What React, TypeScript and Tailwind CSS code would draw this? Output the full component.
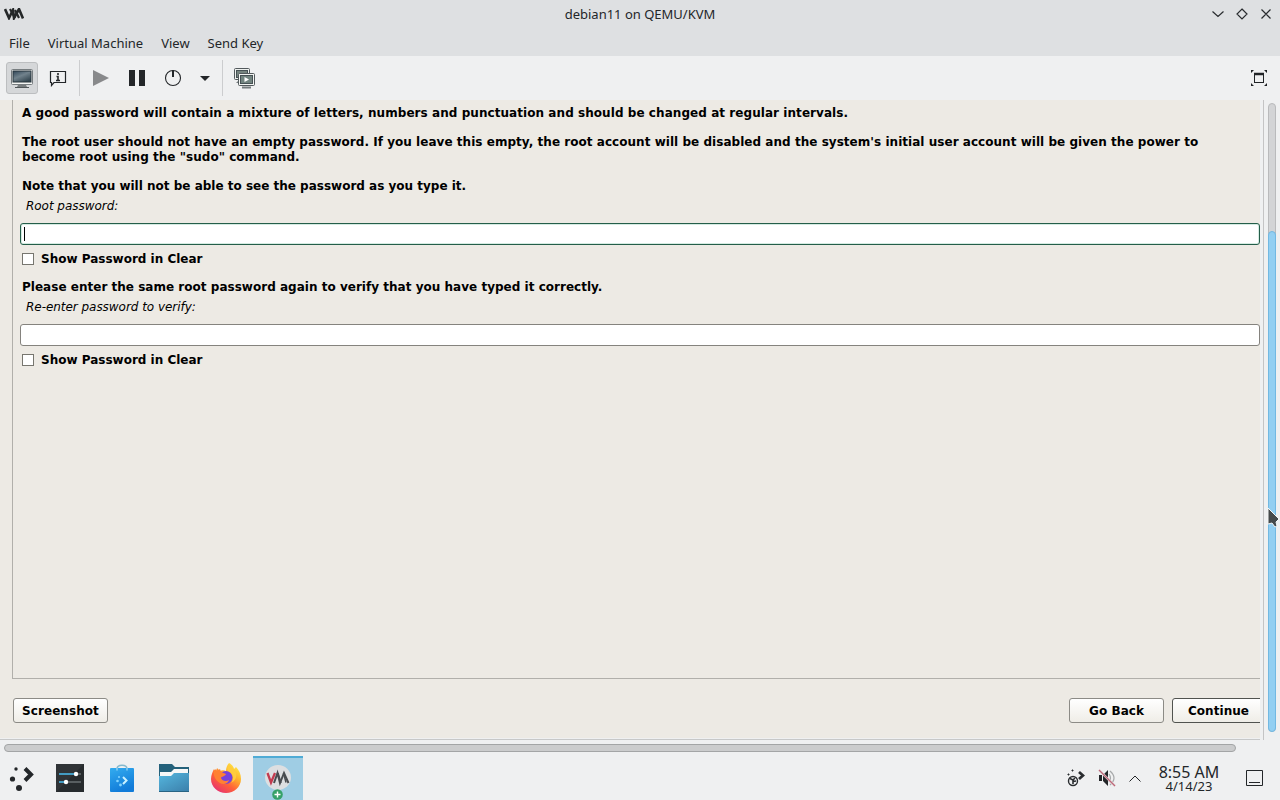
import type { ReactNode } from 'react';

const menus = ['File', 'Virtual Machine', 'View', 'Send Key'];

export default function App() {
  return (
    <div className="relative flex h-[800px] w-[1280px] flex-col overflow-hidden bg-[#eff0f1] font-['Noto_Sans',sans-serif] text-[13.33px] text-[#232629]">
      <TitleBar />
      <nav className="flex h-7 shrink-0 items-center gap-[18px] bg-[#dee0e2] pl-[9px] text-[13px] leading-4">
        {menus.map(menu => (
          <button key={menu} className="pt-0.5">{menu}</button>
        ))}
      </nav>
      <Toolbar />
      <main className="flex h-[640px] shrink-0">
        <div className="w-[1264px] border-r border-[#c4c4c5] pr-[3px]">
          <Installer />
        </div>
        <div className="flex-1 pt-[3px] pl-1">
          <div className="h-[629px] w-2 rounded-full border border-[#b9babc] bg-[#d3d4d6] pt-[127px]">
            <div className="-mx-px h-[501px] w-2 rounded-full border border-[#72b8e2] bg-[#93cff2]" />
          </div>
        </div>
      </main>
      <div className="h-4 shrink-0 pt-1 pl-1">
        <div className="h-2 w-[1232px] rounded-full border border-[#a3a5a6] bg-[#cbcccd]" />
      </div>
      <Taskbar />
      {/* Mouse pointer */}
      <svg className="absolute top-[505px] left-[1265px]" width="15" height="24" viewBox="0 0 15 24">
        <path d="M3 3v16l4-1 3 4 2-1-1-4 3-3z" fill="#454a4c" stroke="#f3f6f7" />
      </svg>
    </div>
  );
}

function TitleBar() {
  return (
    <header className="grid h-7 shrink-0 grid-cols-[1fr_auto_1fr] items-center bg-[#dee0e2]">
      <svg className="ml-1" width="20" height="12" viewBox="0 0 20 12" fill="none" stroke="#252829">
        <path d="M1 1l4 9 4-8 1 8 5-9 4 9.500" strokeWidth="2.600" />
        <path d="M6 1l5 9M11 2l4 8" strokeWidth="2.200" />
      </svg>
      <h1 className="text-[13px] leading-4">debian11 on QEMU/KVM</h1>
      <svg className="ml-auto" width="70" height="16" viewBox="0 0 70 16" fill="none" stroke="#292c2f" strokeWidth="1.200">
        <path d="M2.500 5.500l5.500 5 5.500-5M32 3l5 5-5 5-5-5zM51.500 3.500l9 9m0-9l-9 9" />
      </svg>
    </header>
  );
}

function Toolbar() {
  return (
    <div className="flex h-11 shrink-0 items-center">
      <button className="ml-1.5 flex h-8 w-8 items-center justify-center rounded-[3px] border border-[#bcbec0] bg-[#d5d7d9]">
        <svg width="24" height="24" viewBox="0 0 24 24">
          <defs>
            <linearGradient id="monitor" x2=".7" y2="1">
              <stop stopColor="#304557" />
              <stop offset=".5" stopColor="#71828c" />
              <stop offset="1" stopColor="#344650" />
            </linearGradient>
          </defs>
          <rect x="1.500" y="3.500" width="21" height="15" rx="1" fill="#f4f5f3" stroke="#777d80" />
          <rect x="3" y="5" width="18" height="11" fill="url(#monitor)" stroke="#26343d" />
          <path d="M8 19h8l1 2H7z" fill="#777c7e" />
          <path d="M5 21.500h14" stroke="#4f5558" />
        </svg>
      </button>
      <button className="ml-[11px]">
        <svg width="18" height="18" viewBox="0 0 18 18" fill="none" stroke="#232629">
          <path d="M1.500 2.500h15v11H5l-2.500 3v-3h-1z" strokeWidth="1.200" />
          <path d="M9 4v2M7.500 7.500H9V11M7 11.500h4" strokeWidth="1.600" />
        </svg>
      </button>
      <div className="ml-3 h-9 w-px bg-[#cccdcf]" />
      <button className="ml-3">
        <svg width="18" height="18" viewBox="0 0 18 18"><path d="M1 1v16l16-8z" fill="#88898b" /></svg>
      </button>
      <button className="ml-[19px] flex gap-1">
        <span className="h-4 w-1.5 bg-[#232629]" />
        <span className="h-4 w-1.5 bg-[#232629]" />
      </button>
      <button className="ml-[19px]">
        <svg width="18" height="18" viewBox="0 0 18 18" fill="none" stroke="#232629">
          <circle cx="9" cy="9" r="7.500" strokeWidth="1.100" />
          <path d="M9 1v7" strokeWidth="2" />
        </svg>
      </button>
      <button className="ml-[18px]">
        <svg width="10" height="5" viewBox="0 0 10 5"><path d="M0 0h10L5 5z" fill="#232629" /></svg>
      </button>
      <div className="ml-3 h-9 w-px bg-[#cccdcf]" />
      <button className="ml-[11px]">
        <svg width="22" height="22" viewBox="0 0 22 22">
          <rect x=".5" y="1.500" width="15" height="11" rx="1" fill="#edf0ee" stroke="#52595c" />
          <rect x="2.500" y="3.500" width="11" height="7" fill="#75847f" stroke="#465154" />
          <path d="M2 16h5v-2H4" fill="#747b7d" />
          <rect x="4.500" y="6.500" width="16" height="12" rx="1" fill="#f2f4f2" stroke="#52595c" />
          <rect x="6.500" y="8.500" width="12" height="8" fill="#728480" stroke="#465154" />
          <path d="M10.500 10v5l4.500-2.500z" fill="#fff" />
          <path d="M8 20.500h9" stroke="#747b7d" strokeWidth="2" />
        </svg>
      </button>
      <button className="mr-3 ml-auto">
        <svg width="18" height="18" viewBox="0 0 18 18" fill="#202326" stroke="#202326">
          <path d="M1 1h3L1 4zM17 1h-3l3 3zM1 17h3l-3-3zM17 17h-3l3-3z" stroke="none" />
          <rect x="4.500" y="4.500" width="9" height="9" fill="none" />
          <path d="M4 5h10" strokeWidth="2.500" />
        </svg>
      </button>
    </div>
  );
}

/* Guest display, running the graphical installer */
function Installer() {
  return (
    <div className="flex h-full flex-col border-b border-[#c7c8c8] pb-px">
      <div className="h-full overflow-hidden bg-[#edeae4] pl-3 font-['DejaVu_Sans',sans-serif] text-[12px] leading-[15px] font-bold text-black">
        <div className="h-[579px] border-b border-l border-[#b1afaa] pt-1.5 pl-[7px]">
          <div className="pl-0.5 whitespace-nowrap">
            <p className="tracking-[0.06px]">A good password will contain a mixture of letters, numbers and punctuation and should be changed at regular intervals.</p>
            <p className="mt-3.5 tracking-[0.036px]">
              The root user should not have an empty password. If you leave this empty, the root account will be disabled and the system's initial user account will be given the power to
              <br />
              become root using the "sudo" command.
            </p>
            <p className="mt-3.5">Note that you will not be able to see the password as you type it.</p>
          </div>
          <PasswordField label="Root password:" focused />
          <p className="mt-3.5 pl-0.5 tracking-[0.02px]">Please enter the same root password again to verify that you have typed it correctly.</p>
          <PasswordField label="Re-enter password to verify:" />
        </div>
        <div className="mt-[19px] flex w-[1255px] pl-px">
          <GuestButton className="w-[95px] border-[#8c8b86]">Screenshot</GuestButton>
          <GuestButton className="ml-[961px] w-[95px] border-[#8c8b86]">Go Back</GuestButton>
          <GuestButton className="ml-2 w-[95px] border-[#51534f] pr-0.5">Continue</GuestButton>
        </div>
      </div>
    </div>
  );
}

function PasswordField({ label, focused = false }: { label: string; focused?: boolean }) {
  return (
    <div>
      <label className="mt-[5px] block pl-1.5 text-[12px] font-normal tracking-[-0.04px] italic">{label}</label>
      <div className={`mt-[9px] h-[22px] w-[1240px] rounded-[3px] border bg-white pt-[3px] pl-[3px] ${focused ? 'border-[#245e49] shadow-[inset_0_0_0_1px_#d5ebe2]' : 'border-[#85837e]'}`}>
        {focused && <div className="h-3.5 w-px bg-black" />}
      </div>
      <label className="mt-1.5 flex h-[15px] items-center gap-[7px] pl-0.5">
        <span className="h-3 w-3 border border-[#77766f] bg-white" />
        <span className="pt-0.5">Show Password in Clear</span>
      </label>
    </div>
  );
}

function GuestButton({ className, children }: { className: string; children: ReactNode }) {
  return (
    <button className={`h-[25px] shrink-0 rounded-[3px] border bg-linear-to-b from-white to-[#efede7] pt-0.5 tracking-[0.06px] whitespace-nowrap ${className}`}>
      {children}
    </button>
  );
}

function Taskbar() {
  return (
    <footer className="flex h-11 shrink-0 items-center">
      <svg className="ml-[9px] shrink-0" width="26" height="26" viewBox="0 0 26 26">
        <circle cx="7" cy="4" r="1.700" fill="#232629" />
        <circle cx="3.500" cy="14" r="2.600" fill="#232629" />
        <circle cx="10" cy="23" r="3" fill="#232629" />
        <path d="M16 3.500l6 6-6 6" fill="none" stroke="#232629" strokeWidth="4" />
      </svg>
      <svg className="ml-[21px] shrink-0" width="28" height="28" viewBox="0 0 28 28">
        <path d="M0 0h28v28H0z" fill="#303437" />
        <path d="M0 28L28 0v28z" fill="#272b2e" />
        <path d="M3 10h22M3 18h22" stroke="#697073" strokeWidth="1.500" />
        <path d="M3 10h17M3 18h7" stroke="#3cafe2" strokeWidth="1.500" />
        <circle cx="20" cy="10" r="2.200" fill="#fff" />
        <circle cx="10" cy="18" r="2.200" fill="#fff" />
      </svg>
      <svg className="ml-[26px] shrink-0" width="24" height="28" viewBox="0 0 24 28">
        <defs>
          <linearGradient id="bag" x2=".4" y2="1"><stop stopColor="#33acef" /><stop offset="1" stopColor="#117bd9" /></linearGradient>
        </defs>
        <path d="M7 5c0-5 10-5 10 0" fill="none" stroke="#83b9ce" strokeWidth="1.500" />
        <rect y="4" width="24" height="24" rx="1" fill="url(#bag)" />
        <path d="M7 4v2.500M17 4v2.500" stroke="#bce6f7" />
        <path d="M13 13l3.500 3.500L13 20" fill="none" stroke="#c9f1ff" strokeWidth="2" />
        <g fill="#83d4ff"><circle cx="9" cy="13" r="1" /><circle cx="7.500" cy="17" r="1.300" /><circle cx="10.500" cy="21" r="1.400" /></g>
      </svg>
      <svg className="ml-[25px] shrink-0" width="30" height="28" viewBox="0 0 30 28">
        <defs>
          <linearGradient id="folder" x2=".8" y2="1"><stop stopColor="#55b7df" /><stop offset="1" stopColor="#3d83ae" /></linearGradient>
        </defs>
        <path d="M0 0h13l3 3h14v25H0z" fill="#24617b" />
        <path d="M1 8h11l3-3h14v9H1z" fill="#f6f7f7" />
        <path d="M0 12h12l3-3h15v19H0z" fill="url(#folder)" />
        <path d="M0 27.500h30" stroke="#286484" />
      </svg>
      <Firefox />
      {/* Active task */}
      <div className="ml-[11px] flex h-11 w-[50px] shrink-0 justify-center border-t-2 border-[#4fabd5] bg-[#9fcde4] pt-[5px]">
        <svg width="32" height="38" viewBox="0 0 32 38">
          <ellipse cx="16" cy="14.500" rx="13" ry="12.500" fill="#dddfe1" />
          <path d="M5.500 10l3.500 9.500L13 10" fill="none" stroke="#c33c50" strokeWidth="2.300" />
          <path d="M12 20l3.500-10 2.500 10 4-10 4.500 10" fill="none" stroke="#494c50" strokeWidth="2" />
          <path d="M16 10l3 10M21.500 10l2.500 9.500" stroke="#494c50" strokeWidth="1.500" />
          <circle cx="15.500" cy="31.500" r="5.300" fill="#35a169" />
          <path d="M12.500 31.500h6M15.500 28.500v6" stroke="#fff" strokeWidth="1.400" />
        </svg>
      </div>
      <SystemTray />
    </footer>
  );
}

function Firefox() {
  return (
    <svg className="ml-[21px] shrink-0" width="32" height="32" viewBox="0 0 32 32">
      <defs>
        <linearGradient id="flame" x1=".9" y1="0" x2=".2" y2="1">
          <stop stopColor="#fff44f" /><stop offset=".35" stopColor="#ffb52c" /><stop offset=".65" stopColor="#ff6138" /><stop offset="1" stopColor="#e42e77" />
        </linearGradient>
      </defs>
      <path d="M19 1c4 2 5 5 5 6l2-2c3 3 5 7 5 12 0 8-7 14-15 14S1 25 1 17C1 13 3 9 4 7l2 3 1-4 3 3c2-1 4-1 6 0 0-3 1-6 3-8z" fill="url(#flame)" />
      <circle cx="16" cy="15.500" r="6.500" fill="#7542dc" />
      <path d="M4 9l2-2 1 2 3-2 1 3 5 2c-1 3-5 2-5 4 1 3 5 4 8 2-1 4-6 5-9 3-4-2-7-7-6-12z" fill="#ff8133" />
      <path d="M18 9c5 1 7 8 3 12 7-3 7-12 1-15l-3-4c-2 3-2 5-1 7z" fill="#ffcc3d" />
    </svg>
  );
}

function SystemTray() {
  return (
    <div className="mr-[17px] ml-auto flex items-center">
      <svg width="18" height="18" viewBox="0 0 18 18" fill="none" stroke="#292c2f">
        <circle cx="6" cy="12" r="4.500" strokeWidth="1.400" />
        <path d="M3 9.500l3 1.500 2-2M6 15v-2.500l3-.5" strokeWidth="1.600" />
        <path d="M12 3l4 3.500-4 3.500" strokeWidth="2.800" />
        <path d="M5 1h1v1H5zM1 5h1v1H1z" fill="#292c2f" />
      </svg>
      <svg className="ml-[13px]" width="18" height="18" viewBox="0 0 18 18" fill="none">
        <path d="M1 6h3v6H1zM5 6l5-5v16l-5-5z" fill="#232629" />
        <path d="M11 5q3 4 0 8M12 2q8 7 0 14" stroke="#a6a8a9" strokeWidth="1.200" />
        <path d="M1 1l16 16" stroke="#e4d5d8" strokeWidth="2.400" />
        <path d="M1 1l16 16" stroke="#bd6677" strokeWidth="1.100" />
      </svg>
      <svg className="ml-[13px]" width="12" height="7" viewBox="0 0 12 7" fill="none" stroke="#232629">
        <path d="M.5 6.500L6 1l5.500 5.500" />
      </svg>
      <div className="ml-[17px] w-[62px] text-center whitespace-nowrap">
        <div className="text-[16px] leading-[17px]">8:55 AM</div>
        <div className="text-[13px] leading-[11px]">4/14/23</div>
      </div>
      <svg className="ml-[26px]" width="17" height="16" viewBox="0 0 17 16" fill="none" stroke="#232629">
        <path d="M.5.5h16v15H.5zM3 12.500h11" />
      </svg>
    </div>
  );
}
